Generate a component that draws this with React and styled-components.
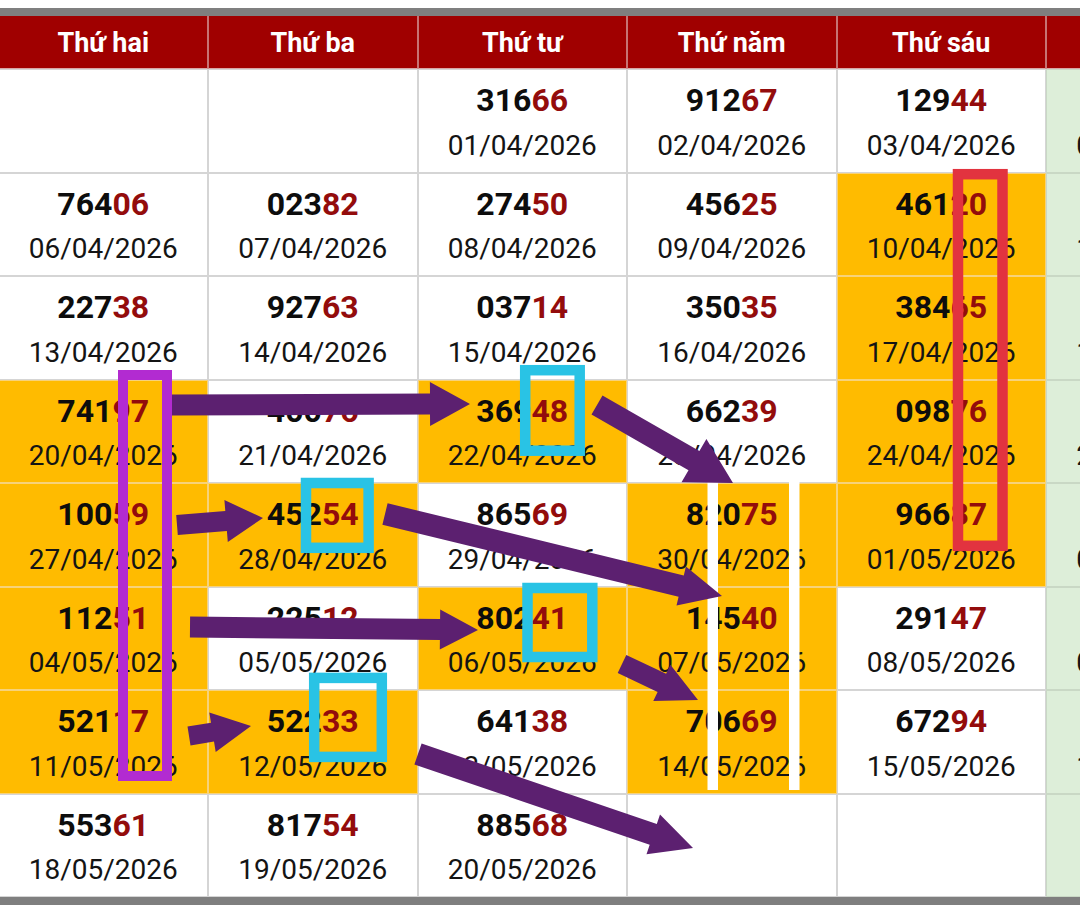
import React from 'react';
import styled, { createGlobalStyle } from 'styled-components';

const GlobalStyle = createGlobalStyle`
  html, body {
    margin: 0;
    padding: 0;
    background: #fff;
    overflow: hidden;
  }
  body {
    font-family: Roboto, "Noto Sans", "Liberation Sans", sans-serif;
  }
`;

const Page = styled.div`
  position: relative;
  width: 1080px;
  height: 912px;
  overflow: hidden;
  padding-top: 7.5px;
  box-sizing: border-box;
`;

const Table = styled.div`
  display: grid;
  grid-template-columns: repeat(6, 209.5px);
  grid-template-rows: 53.5px repeat(8, 103.5px);
  width: max-content;
  margin-left: -1.5px;
  border-top: 8px solid #7f7f7f;
  border-bottom: 8px solid #7f7f7f;
`;

const HeadCell = styled.div`
  box-sizing: border-box;
  background: #a00000;
  color: #fff;
  font-weight: 700;
  font-size: 27px;
  line-height: 51.5px;
  padding-top: 2px;
  text-align: center;
  border-right: 1px solid #c77373;
  border-left: 1px solid #c77373;
  border-bottom: 1px solid #d9a5a5;
`;

const tones = {
  plain: { bg: '#ffffff', line: '#d5d5d5' },
  hit: { bg: '#ffbb00', line: '#f7d27a' },
  weekend: { bg: '#ddeed9', line: '#c9d8c5' },
};

const Cell = styled.div`
  box-sizing: border-box;
  display: flex;
  flex-direction: column;
  align-items: center;
  padding-top: 10px;
  background: ${p => tones[p.$tone].bg};
  border: 1px solid ${p => tones[p.$tone].line};
`;

const Number = styled.div`
  font-size: 32px;
  line-height: 40px;
  font-weight: 700;
  color: #0d0d0d;
  white-space: nowrap;
`;

const Tail = styled.span`
  color: #930c0c;
`;

const DateText = styled.div`
  margin-top: 5.5px;
  font-size: 28px;
  line-height: 40px;
  color: #141414;
  white-space: nowrap;
`;

const Overlay = styled.svg`
  position: absolute;
  left: 0;
  top: 0;
  width: 1080px;
  height: 912px;
  pointer-events: none;
`;

const days = ['Thứ hai', 'Thứ ba', 'Thứ tư', 'Thứ năm', 'Thứ sáu', 'Thứ bảy'];

// [number, date, highlighted]
const rows = [
  [null, null, ['31666', '01/04/2026'], ['91267', '02/04/2026'], ['12944', '03/04/2026'], ['58213', '04/04/2026']],
  [['76406', '06/04/2026'], ['02382', '07/04/2026'], ['27450', '08/04/2026'], ['45625', '09/04/2026'], ['46120', '10/04/2026', true], ['17305', '11/04/2026']],
  [['22738', '13/04/2026'], ['92763', '14/04/2026'], ['03714', '15/04/2026'], ['35035', '16/04/2026'], ['38465', '17/04/2026', true], ['60982', '18/04/2026']],
  [['74197', '20/04/2026', true], ['40076', '21/04/2026'], ['36948', '22/04/2026', true], ['66239', '23/04/2026'], ['09876', '24/04/2026', true], ['25417', '25/04/2026']],
  [['10059', '27/04/2026', true], ['45254', '28/04/2026', true], ['86569', '29/04/2026'], ['82075', '30/04/2026', true], ['96687', '01/05/2026', true], ['71350', '02/05/2026']],
  [['11251', '04/05/2026', true], ['22512', '05/05/2026'], ['80241', '06/05/2026', true], ['14540', '07/05/2026', true], ['29147', '08/05/2026'], ['43826', '09/05/2026']],
  [['52117', '11/05/2026', true], ['52233', '12/05/2026', true], ['64138', '13/05/2026'], ['70669', '14/05/2026', true], ['67294', '15/05/2026'], ['38751', '16/05/2026']],
  [['55361', '18/05/2026'], ['81754', '19/05/2026'], ['88568', '20/05/2026'], null, null, null],
];

// tail x, tail y, tip x, tip y, shaft, head width, head length
const arrows = [
  [172, 405, 470, 404, 21, 44, 40],
  [597, 405, 733, 483, 22, 50, 45],
  [177, 525, 263, 518, 20, 42, 37],
  [385, 514, 722, 596, 22, 40, 42],
  [190, 627, 478, 630, 21, 40, 38],
  [622, 664, 698, 700, 20, 40, 40],
  [189, 736, 251, 726, 19, 40, 39],
  [418, 754, 693, 848, 22, 42, 42],
];

const cyanBoxes = [
  [525.2, 370.2, 54.5, 80.5],
  [306, 483, 62.6, 64.8],
  [527.5, 588, 64.8, 69],
  [314.2, 677.9, 67.6, 79],
];

function arrowPoints(x1, y1, x2, y2, shaft, headW, headL) {
  const dx = x2 - x1;
  const dy = y2 - y1;
  const len = Math.hypot(dx, dy);
  const ux = dx / len;
  const uy = dy / len;
  const nx = -uy;
  const ny = ux;
  const bx = x2 - ux * headL;
  const by = y2 - uy * headL;
  const s = shaft / 2;
  const h = headW / 2;
  const pts = [
    [x1 + nx * s, y1 + ny * s],
    [bx + nx * s, by + ny * s],
    [bx + nx * h, by + ny * h],
    [x2, y2],
    [bx - nx * h, by - ny * h],
    [bx - nx * s, by - ny * s],
    [x1 - nx * s, y1 - ny * s],
  ];
  return pts.map(p => p.map(v => v.toFixed(1)).join(',')).join(' ');
}

function ResultCell({ entry, col }) {
  const weekend = col === 5;
  const tone = weekend ? 'weekend' : entry && entry[2] ? 'hit' : 'plain';
  return (
    <Cell $tone={tone}>
      {entry && (
        <>
          <Number>
            {entry[0].slice(0, 3)}
            <Tail>{entry[0].slice(3)}</Tail>
          </Number>
          <DateText>{entry[1]}</DateText>
        </>
      )}
    </Cell>
  );
}

export default function App() {
  return (
    <Page>
      <GlobalStyle />
      <Table>
        {days.map(d => (
          <HeadCell key={d}>{d}</HeadCell>
        ))}
        {rows.map((row, r) =>
          row.map((entry, c) => <ResultCell key={r + '-' + c} entry={entry} col={c} />)
        )}
      </Table>
      <Overlay viewBox="0 0 1080 912">
        <rect x="707.5" y="481" width="10.5" height="309" fill="#fff" />
        <rect x="789" y="481" width="10.5" height="309" fill="#fff" />
        <rect x="123" y="375" width="44" height="401" fill="none" stroke="#b22bd1" strokeWidth="10" />
        <rect x="958" y="174.2" width="44.5" height="371.6" fill="none" stroke="#e2333f" strokeWidth="10.5" />
        {cyanBoxes.map(([x, y, w, h], i) => (
          <rect key={i} x={x} y={y} width={w} height={h} fill="none" stroke="#29c3e5" strokeWidth="10.5" />
        ))}
        {arrows.map((a, i) => (
          <polygon key={i} points={arrowPoints(...a)} fill="#5c2070" />
        ))}
      </Overlay>
    </Page>
  );
}
